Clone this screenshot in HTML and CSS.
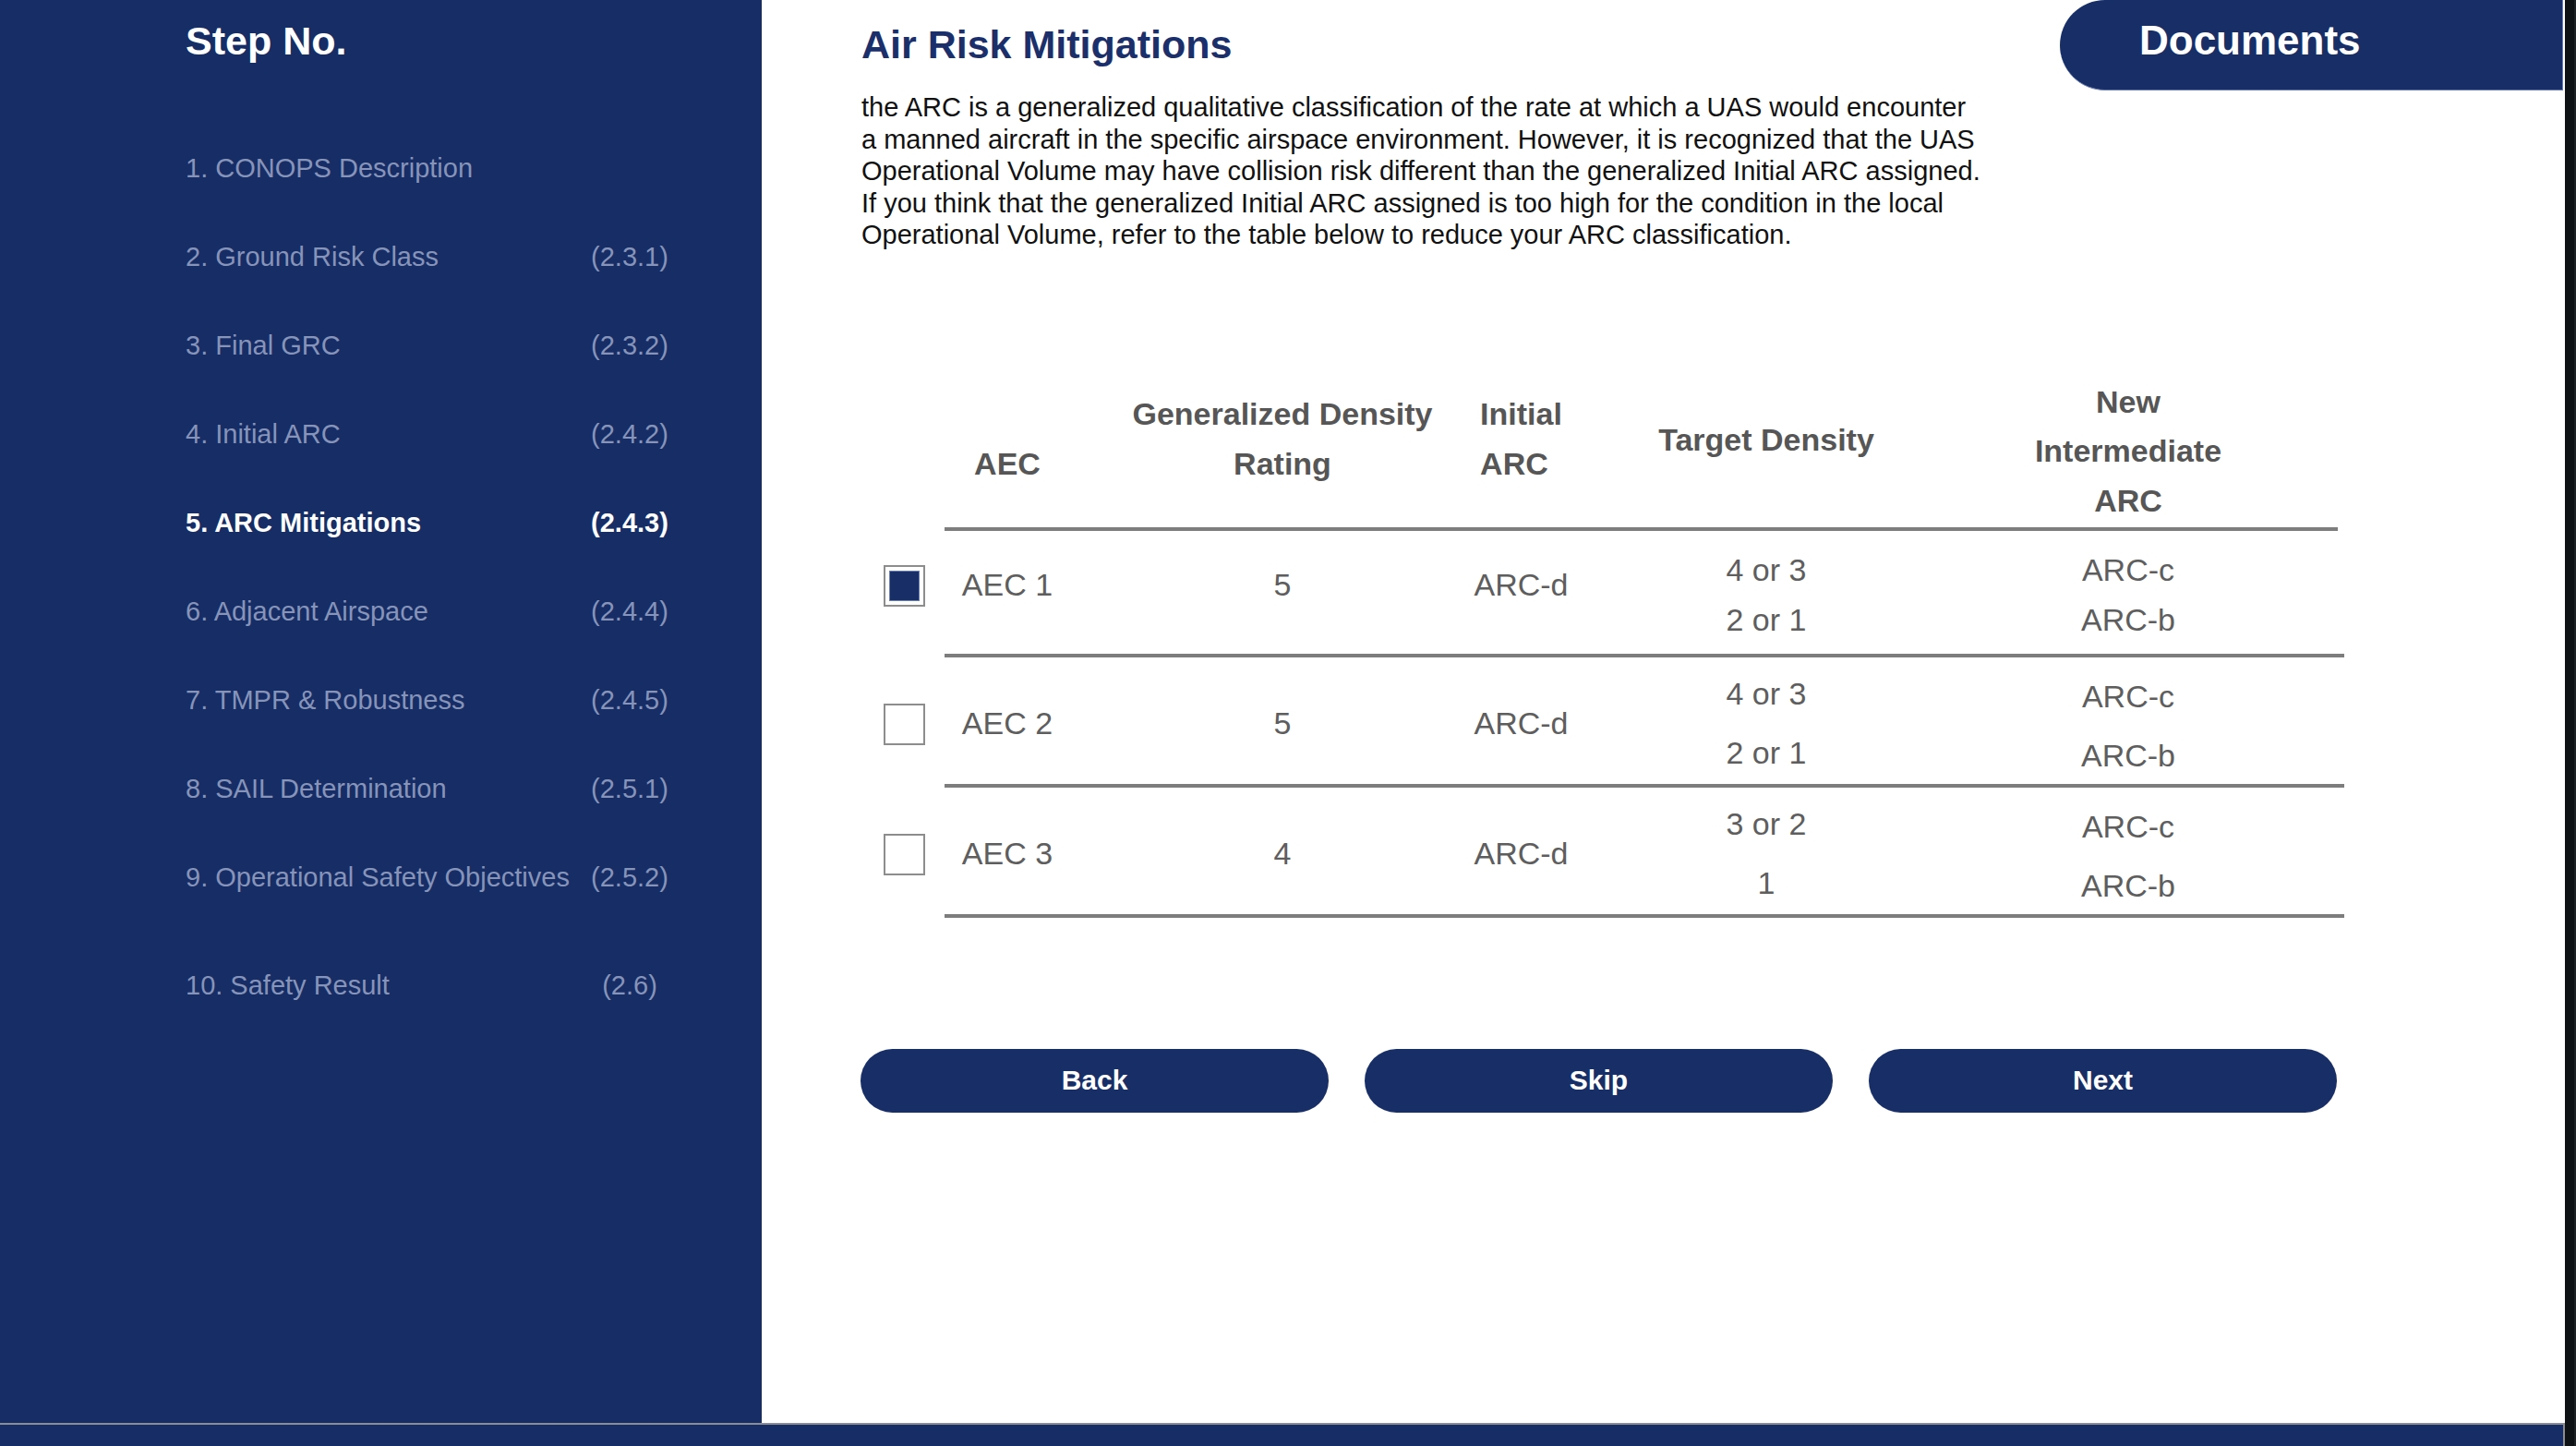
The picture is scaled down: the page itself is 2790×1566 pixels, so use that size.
FILE: index.html
```html
<!DOCTYPE html>
<html lang="en">
<head>
<meta charset="utf-8">
<title>Air Risk Mitigations</title>
<link rel="stylesheet" href="styles.css">
</head>
<body>
<div class="app">
  <div class="screen">
    <div class="main">
      <aside class="sidebar">
        <h2 class="side-title">Step No.</h2>
        <ul class="steps">
          <li class="step"><span class="step-label">1. CONOPS Description</span><span class="step-code"></span></li>
          <li class="step"><span class="step-label">2. Ground Risk Class</span><span class="step-code">(2.3.1)</span></li>
          <li class="step"><span class="step-label">3. Final GRC</span><span class="step-code">(2.3.2)</span></li>
          <li class="step"><span class="step-label">4. Initial ARC</span><span class="step-code">(2.4.2)</span></li>
          <li class="step step-active"><span class="step-label">5. ARC Mitigations</span><span class="step-code">(2.4.3)</span></li>
          <li class="step"><span class="step-label">6. Adjacent Airspace</span><span class="step-code">(2.4.4)</span></li>
          <li class="step"><span class="step-label">7. TMPR &amp; Robustness</span><span class="step-code">(2.4.5)</span></li>
          <li class="step"><span class="step-label">8. SAIL Determination</span><span class="step-code">(2.5.1)</span></li>
          <li class="step"><span class="step-label">9. Operational Safety Objectives</span><span class="step-code">(2.5.2)</span></li>
          <li class="step step-last"><span class="step-label">10. Safety Result</span><span class="step-code">(2.6)</span></li>
        </ul>
      </aside>
      <main class="content">
        <a class="docs-tab" href="#">Documents</a>
        <h1 class="page-title">Air Risk Mitigations</h1>
        <p class="intro">the ARC is a generalized qualitative classification of the rate at which a UAS would encounter<br>a manned aircraft in the specific airspace environment. However, it is recognized that the UAS<br>Operational Volume may have collision risk different than the generalized Initial ARC assigned.<br>If you think that the generalized Initial ARC assigned is too high for the condition in the local<br>Operational Volume, refer to the table below to reduce your ARC classification.</p>

        <div class="table">
          <div class="trow thead">
            <div class="check-cell"></div>
            <div class="cells">
              <div class="th pb-42">AEC</div>
              <div class="th th-shift pb-42">Generalized Density<br>Rating</div>
              <div class="th pb-42"><span class="th-left">Initial<br>ARC</span></div>
              <div class="th pb-68">Target Density</div>
              <div class="th th-last pb-2">New<br>Intermediate<br>ARC</div>
            </div>
          </div>

          <div class="trow row-1">
            <div class="check-cell"><span class="checkbox checked"></span></div>
            <div class="cells">
              <div class="td single">AEC 1</div>
              <div class="td td-shift single">5</div>
              <div class="td single">ARC-d</div>
              <div class="td double tight">4 or 3<br>2 or 1</div>
              <div class="td td-last double tight">ARC-c<br>ARC-b</div>
            </div>
          </div>

          <div class="trow row-n">
            <div class="check-cell"><span class="checkbox"></span></div>
            <div class="cells">
              <div class="td">AEC 2</div>
              <div class="td td-shift">5</div>
              <div class="td">ARC-d</div>
              <div class="td loose">4 or 3<br>2 or 1</div>
              <div class="td td-last loose lower">ARC-c<br>ARC-b</div>
            </div>
          </div>

          <div class="trow row-n">
            <div class="check-cell"><span class="checkbox"></span></div>
            <div class="cells">
              <div class="td">AEC 3</div>
              <div class="td td-shift">4</div>
              <div class="td">ARC-d</div>
              <div class="td loose">3 or 2<br>1</div>
              <div class="td td-last loose lower">ARC-c<br>ARC-b</div>
            </div>
          </div>
        </div>

        <div class="actions">
          <button class="btn" type="button">Back</button>
          <button class="btn" type="button">Skip</button>
          <button class="btn" type="button">Next</button>
        </div>
      </main>
    </div>
    <div class="bottom-bar"></div>
  </div>
  <div class="edge"></div>
</div>
</body>
</html>
```

FILE: styles.css
```css
* { box-sizing: border-box; }

html, body {
  margin: 0;
  padding: 0;
}

body {
  width: 2790px;
  height: 1566px;
  overflow: hidden;
  background: #0f1315;
  font-family: "Liberation Sans", Arial, Helvetica, sans-serif;
}

.app {
  display: flex;
  width: 2790px;
  height: 1566px;
}

.screen {
  width: 2778px;
  height: 1566px;
  display: flex;
  flex-direction: column;
}

.edge {
  width: 12px;
  height: 1566px;
  background: #0e1214;
  border-right: 2px solid #1d2224;
}

.main {
  display: flex;
  height: 1541px;
  background: #ffffff;
}

.bottom-bar {
  height: 25px;
  background: #162d66;
  border-top: 2px solid #8b8d93;
  border-right: 2px solid #8b8d93;
}

/* Sidebar */
.sidebar {
  width: 825px;
  flex: 0 0 825px;
  background: #162d66;
  padding: 19px 0 0 201px;
}

.side-title {
  margin: 0;
  font-size: 43px;
  line-height: 50px;
  font-weight: 700;
  color: #ffffff;
}

.steps {
  list-style: none;
  margin: 65px 0 0 0;
  padding: 0;
}

.step {
  display: flex;
  align-items: center;
  height: 96px;
  font-size: 29px;
  color: #8794b9;
}

.step-label {
  width: 439px;
  white-space: nowrap;
}

.step-code {
  width: 84px;
  text-align: center;
}

.step-active {
  color: #ffffff;
  font-weight: 700;
}

.step-last {
  margin-top: 21px;
}

/* Content */
.content {
  position: relative;
  flex: 1;
  padding: 23px 0 0 108px;
}

.docs-tab {
  position: absolute;
  top: 0;
  right: 2px;
  width: 545px;
  height: 98px;
  background: #172e67;
  border-radius: 49px 0 0 49px;
  border-bottom: 1px solid #6b7fae;
  border-right: 1px solid #6b7fae;
  color: #ffffff;
  text-decoration: none;
  font-size: 44px;
  font-weight: 700;
  line-height: 88px;
  padding-left: 86px;
}

.page-title {
  margin: 0;
  font-size: 43px;
  line-height: 50px;
  font-weight: 700;
  color: #1b2f6b;
}

.intro {
  margin: 26px 0 0 0;
  font-size: 29px;
  line-height: 34.6px;
  color: #111111;
  white-space: nowrap;
}

/* Table */
.table {
  margin: 137px 0 0 24px;
  width: 1575px;
}

.trow {
  display: flex;
}

.check-cell {
  width: 66px;
  flex: 0 0 66px;
  display: flex;
  align-items: center;
  padding-top: 5px;
}

.cells {
  flex: 1;
  display: grid;
  grid-template-columns: 136px 358px 261px 270px 484px;
  border-bottom: 4px solid #7d7d7d;
}

.row-1 .cells,
.row-n .cells {
  margin-right: -7px;
}

.thead .cells {
  height: 166px;
}

.th {
  display: flex;
  flex-direction: column;
  justify-content: flex-end;
  align-items: center;
  text-align: center;
  font-size: 34px;
  line-height: 53.5px;
  font-weight: 700;
  color: #565656;
  white-space: nowrap;
}

.th-left {
  text-align: left;
}

.th-shift, .td-shift { padding-left: 102px; }
.th-last, .td-last { padding-left: 30px; }

.pb-42 { padding-bottom: 42px; }
.pb-68 { padding-bottom: 68px; }
.pb-2 { padding-bottom: 2px; }

.row-1 .cells { height: 137px; }
.row-n .cells { height: 141px; }

.td {
  display: flex;
  flex-direction: column;
  justify-content: center;
  align-items: center;
  text-align: center;
  font-size: 34px;
  color: #5e5e5e;
  white-space: nowrap;
  line-height: 40px;
}

.row-n .td { padding-top: 4px; }

.row-1 .td.single { padding-bottom: 17px; }
.row-1 .td.double { padding-top: 7px; }
.row-1 .check-cell { padding-top: 0; padding-bottom: 17px; }

.tight { line-height: 53.5px; }
.loose { line-height: 64px; }
.row-n .lower { padding-top: 10px; }

.checkbox {
  display: block;
  width: 45px;
  height: 45px;
  border: 2px solid #8d8d8d;
  background: #ffffff;
  padding: 4px;
}

.checkbox.checked::after {
  content: "";
  display: block;
  width: 100%;
  height: 100%;
  background: #172e67;
  box-shadow: 0 0 0 1px #6b7fae inset;
}

/* Actions */
.actions {
  display: flex;
  gap: 39px;
  margin-top: 142px;
  margin-left: -1px;
}

.btn {
  width: 507px;
  height: 69px;
  border: none;
  border-radius: 35px;
  background: #172e67;
  color: #ffffff;
  font-family: "Liberation Sans", Arial, Helvetica, sans-serif;
  font-size: 30px;
  font-weight: 700;
  cursor: pointer;
  padding: 0;
}
```
